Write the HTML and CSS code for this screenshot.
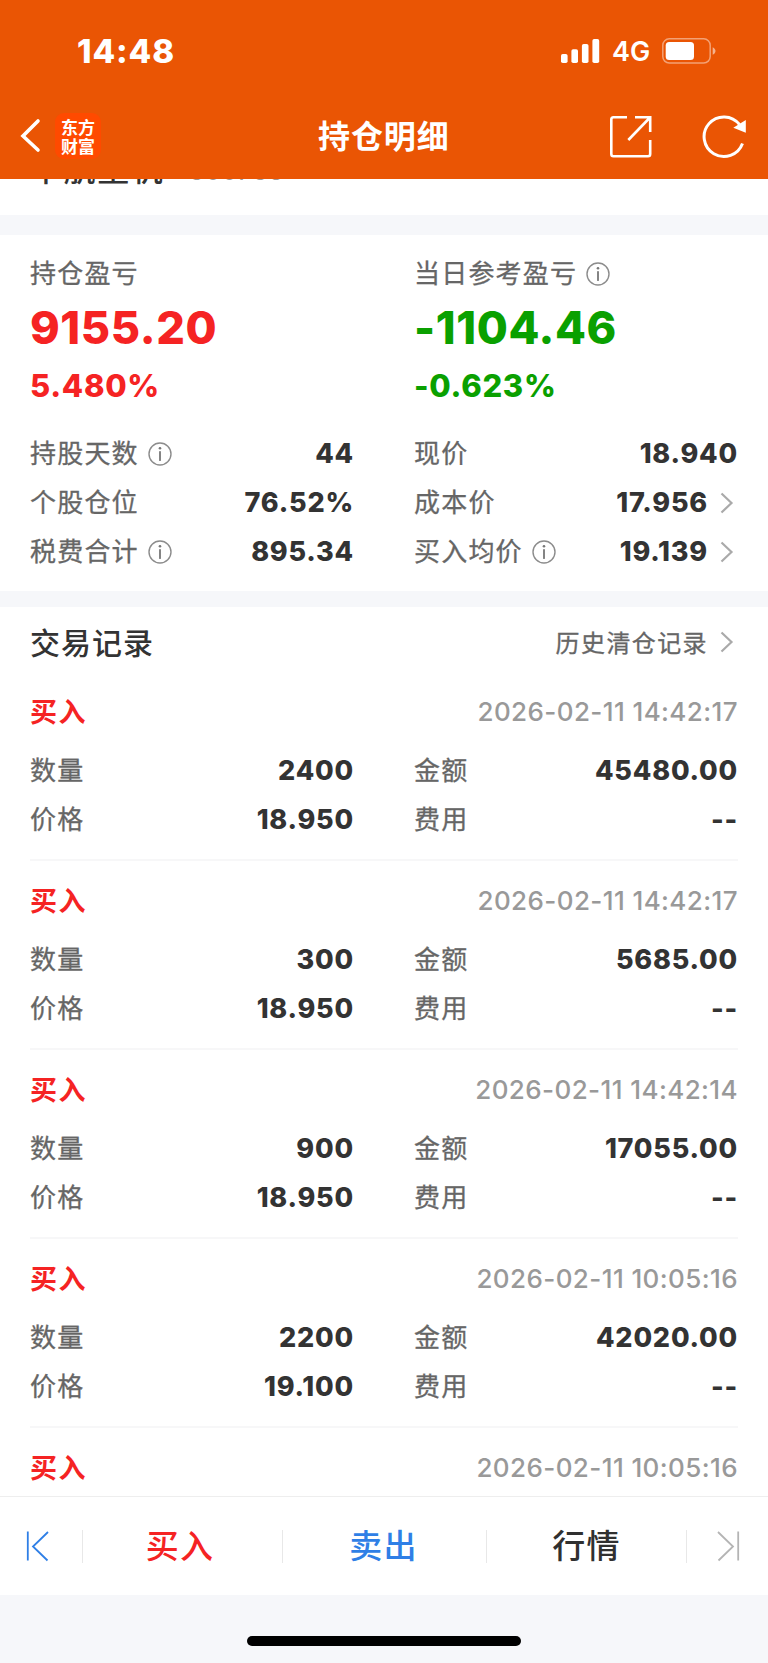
FILE: index.html
```html
<!DOCTYPE html>
<html lang="zh-CN">
<head>
<meta charset="utf-8">
<title>持仓明细</title>
<link rel="stylesheet" href="styles.css">
</head>
<body>
<svg width="0" height="0" class="defs">
  <symbol id="info" viewBox="0 0 24 24"><circle cx="12" cy="12" r="11" fill="none" stroke="#8c8c8c" stroke-width="1.4"/><path d="M12 9.8V18.2" stroke="#777" stroke-width="1.8" stroke-linecap="round"/><circle cx="12" cy="6.3" r="1.3" fill="#777"/></symbol>
  <symbol id="more" viewBox="0 0 14 22"><path d="M1.5 1.5L11.5 11L1.5 20.5" fill="none" stroke="#aaa" stroke-width="2.2"/></symbol>
</svg>
<header class="header">
  <div class="status">
    <span class="clock">14:48</span>
    <svg class="signal" width="39" height="24" viewBox="0 0 39 24" fill="#fff"><rect x="0" y="15" width="6.6" height="9" rx="1.8"/><rect x="10.4" y="10.3" width="6.6" height="13.7" rx="1.8"/><rect x="20.9" y="5" width="6.6" height="19" rx="1.8"/><rect x="31.4" y="0" width="6.8" height="24" rx="1.8"/></svg>
    <span class="net">4G</span>
    <svg class="battery" width="54" height="26" viewBox="0 0 54 26"><rect x=".8" y=".8" width="47.4" height="24.2" rx="6.5" fill="none" stroke="#fff" stroke-opacity=".45" stroke-width="1.5"/><rect x="3.7" y="4" width="28.3" height="18" rx="3.5" fill="#fff"/><path d="M50.7 9.2C54.4 10.8 54.4 15.2 50.7 16.8Z" fill="#fff" fill-opacity=".55"/></svg>
  </div>
  <div class="nav">
    <svg class="back" width="22" height="36" viewBox="0 0 22 36"><path d="M18 3L3 18L18 32" fill="none" stroke="#fff" stroke-width="3.6" stroke-linecap="round" stroke-linejoin="miter"/></svg>
    <div class="logo"><span>东方</span><span>财富</span></div>
    <h1 class="title">持仓明细</h1>
    <svg class="share" width="44" height="44" viewBox="0 0 44 44" fill="none" stroke="#fff" stroke-width="2.6"><path d="M18 2.3H4.5Q2.3 2.3 2.3 4.5V39Q2.3 41.3 4.5 41.3H39Q41.2 41.3 41.2 39V25"/><path d="M26 2.3H41.2V17M41 2.5L19.3 25"/></svg>
    <svg class="reload" width="46" height="46" viewBox="0 0 46 46"><path d="M37.5 11.5A19.8 19.8 0 1 0 40.5 30.5" fill="none" stroke="#fff" stroke-width="3"/><path d="M43.8 7V19.8L31.3 14.8Z" fill="#fff"/></svg>
  </div>
</header>
<section class="stock"><b class="stock-name">中航重机</b><span class="stock-code">600765</span></section>
<section class="summary">
  <div class="col">
    <div class="label">持仓盈亏</div>
    <div class="big red">9155.20</div>
    <div class="pct red">5.480%</div>
    <div class="row"><span class="label">持股天数</span><svg class="info"><use href="#info"/></svg><b class="value">44</b></div>
    <div class="row"><span class="label">个股仓位</span><b class="value">76.52%</b></div>
    <div class="row"><span class="label">税费合计</span><svg class="info"><use href="#info"/></svg><b class="value">895.34</b></div>
  </div>
  <div class="col">
    <div class="label top">当日参考盈亏<svg class="info"><use href="#info"/></svg></div>
    <div class="big green">-1104.46</div>
    <div class="pct green">-0.623%</div>
    <div class="row"><span class="label">现价</span><b class="value">18.940</b></div>
    <div class="row"><span class="label">成本价</span><b class="value">17.956</b><svg class="more"><use href="#more"/></svg></div>
    <div class="row"><span class="label">买入均价</span><svg class="info"><use href="#info"/></svg><b class="value">19.139</b><svg class="more"><use href="#more"/></svg></div>
  </div>
</section>
<main class="records">
  <div class="records-head"><h2 class="records-title">交易记录</h2><span class="history">历史清仓记录</span><svg class="more"><use href="#more"/></svg></div>
  <article class="record">
    <div class="record-head"><b class="side">买入</b><time class="time">2026-02-11 14:42:17</time></div>
    <div class="grid">
      <div class="row"><span class="label">数量</span><b class="value">2400</b></div><div class="row"><span class="label">金额</span><b class="value">45480.00</b></div>
      <div class="row"><span class="label">价格</span><b class="value">18.950</b></div><div class="row"><span class="label">费用</span><b class="value">--</b></div>
    </div>
  </article>
  <article class="record">
    <div class="record-head"><b class="side">买入</b><time class="time">2026-02-11 14:42:17</time></div>
    <div class="grid">
      <div class="row"><span class="label">数量</span><b class="value">300</b></div><div class="row"><span class="label">金额</span><b class="value">5685.00</b></div>
      <div class="row"><span class="label">价格</span><b class="value">18.950</b></div><div class="row"><span class="label">费用</span><b class="value">--</b></div>
    </div>
  </article>
  <article class="record">
    <div class="record-head"><b class="side">买入</b><time class="time">2026-02-11 14:42:14</time></div>
    <div class="grid">
      <div class="row"><span class="label">数量</span><b class="value">900</b></div><div class="row"><span class="label">金额</span><b class="value">17055.00</b></div>
      <div class="row"><span class="label">价格</span><b class="value">18.950</b></div><div class="row"><span class="label">费用</span><b class="value">--</b></div>
    </div>
  </article>
  <article class="record">
    <div class="record-head"><b class="side">买入</b><time class="time">2026-02-11 10:05:16</time></div>
    <div class="grid">
      <div class="row"><span class="label">数量</span><b class="value">2200</b></div><div class="row"><span class="label">金额</span><b class="value">42020.00</b></div>
      <div class="row"><span class="label">价格</span><b class="value">19.100</b></div><div class="row"><span class="label">费用</span><b class="value">--</b></div>
    </div>
  </article>
  <article class="record">
    <div class="record-head"><b class="side">买入</b><time class="time">2026-02-11 10:05:16</time></div>
  </article>
</main>
<nav class="toolbar">
  <span class="step"><svg width="24" height="32" viewBox="0 0 24 32" fill="none" stroke="#2f7fe6" stroke-width="1.8"><path d="M1.8 1.5V30.5M22 2L7 16.5L21.5 30.5"/></svg></span>
  <span class="action red">买入</span>
  <span class="action blue">卖出</span>
  <span class="action dark">行情</span>
  <span class="step next"><svg width="24" height="32" viewBox="0 0 24 32" fill="none" stroke="#b4b4b4" stroke-width="1.8"><path d="M22.2 1.5V30.5M2 2L17 16.5L2.5 30.5"/></svg></span>
</nav>
<footer class="home"><div class="home-bar"></div></footer>
</body>
</html>
```
FILE: styles.css
```css
* { box-sizing: border-box; margin: 0; padding: 0; }
body {
  width: 768px; height: 1663px; overflow: hidden;
  display: flex; flex-direction: column;
  background: #fff; color: #333;
  font-family: Inter, "Noto Sans CJK SC", sans-serif;
}
svg { display: block; flex: none; }
.defs { position: absolute; }
.header { height: 179px; flex: none; background: #ea5504; color: #fff; }
.status { height: 102px; display: flex; align-items: center; }
.clock { width: 483px; flex: none; padding-left: 77px; font-size: 33px; font-weight: 800; letter-spacing: 0.9px; }
.signal { margin-left: 78px; }
.net { width: 62px; flex: none; padding-left: 12px; font-size: 27px; font-weight: 600; line-height: 36px; white-space: nowrap; margin-top: 2px; }
.nav { height: 68px; display: flex; align-items: center; }
.back { margin-left: 20px; }
.logo {
  width: 46px; height: 46px; margin-left: 13px; border-radius: 9px; background: #ff4a00;
  display: flex; flex-direction: column; align-items: center; justify-content: center;
}
.logo span { height: 19px; font: 700 17px/19px "Noto Sans CJK SC", sans-serif; }
.title { width: 130px; margin-left: 217px; margin-top: 2px; font-size: 32px; font-weight: 700; line-height: 46px; letter-spacing: 0.9px; white-space: nowrap; }
.share { margin-left: 161px; margin-top: 1px; }
.reload { margin-left: 49px; }

.stock { height: 36px; flex: none; overflow: hidden; display: flex; align-items: flex-start; padding-left: 30px; }
.stock-name { margin-top: -32px; font-size: 32px; font-weight: 500; line-height: 46px; letter-spacing: 1.6px; }
.stock-code { margin-left: 24px; margin-top: -28px; font-size: 26px; line-height: 40px; letter-spacing: 0.2px; color: #999; }

.summary { height: 392px; flex: none; padding: 14px 30px 0 30px; border: solid #f6f7fa; border-width: 20px 0 16px; display: grid; grid-template-columns: 324px 324px; column-gap: 60px; }
.label { font-size: 26px; line-height: 49px; letter-spacing: 1.2px; color: #666; white-space: nowrap; -webkit-text-stroke: 0.3px #666; }
.top { display: flex; align-items: center; }
.big { height: 60px; font-size: 45px; line-height: 60px; font-weight: 800; letter-spacing: 0.6px; }
.pct { height: 57px; font-size: 31px; line-height: 56px; font-weight: 800; letter-spacing: 0.7px; margin-bottom: 14px; }
.red { color: #f52323; }
.green { color: #0aa000; }
.blue { color: #2f7fe6; }
.row { height: 49px; display: flex; align-items: center; }
.info { width: 24px; height: 24px; margin-left: 9px; margin-top: 1px; }
.top .info { margin-top: 0; }
.value { margin-left: auto; font-size: 27px; line-height: 49px; font-weight: 800; letter-spacing: 0.8px; }
.more { width: 14px; height: 22px; margin: 0 4px 0 12px; }

.records { height: 889px; flex: none; overflow: hidden; padding: 0 30px; }
.records-head { height: 65px; padding-top: 4px; display: flex; align-items: center; }
.records-title { font-size: 30px; font-weight: 500; letter-spacing: 1px; margin-top: -2px; }
.history { margin-left: auto; font-size: 24px; letter-spacing: 1.4px; color: #666; -webkit-text-stroke: 0.3px #666; }
.record { height: 189px; border-bottom: 2px solid #f7f7f8; }
.record-head { height: 74px; padding-top: 4px; display: flex; align-items: center; justify-content: space-between; }
.side { font-size: 27px; letter-spacing: 1.4px; color: #f52323; margin-top: -2px; }
.time { font-size: 26px; font-weight: 500; letter-spacing: 0.4px; color: #999; }
.grid { display: grid; grid-template-columns: 324px 324px; column-gap: 60px; }

.toolbar { height: 99px; flex: none; border-top: 1px solid #eee; display: grid; grid-template-columns: 82px 200px 204px 200px 82px; align-items: center; }
.toolbar > * { height: 33px; display: flex; align-items: center; justify-content: center; }
.toolbar > * + * { border-left: 1px solid #e8e8e8; }
.step { padding-right: 6px; }
.next { padding: 0; }
.action { font-size: 33px; font-weight: 500; letter-spacing: 1.2px; padding: 0 2px 4px 0; }
.action.red { padding-right: 5px; }
.action.dark { color: #303030; padding-right: 0; }
.home { height: 68px; flex: none; background: #f6f7fa; padding-top: 41px; }
.home-bar { width: 274px; height: 10px; margin-left: 247px; border-radius: 5px; background: #000; }
```
